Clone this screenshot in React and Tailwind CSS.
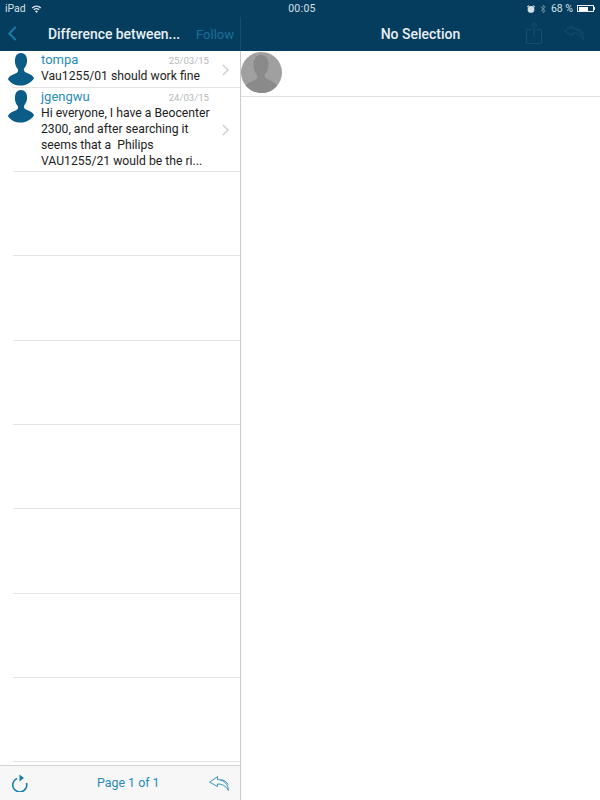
import React from "react";

const Person = ({ className }) => (
  <svg viewBox="0 0 30 38" className={className} fill="currentColor">
    <path d="M15 0c4.300 0 7 3.300 7 8.500 0 3.500-1.300 6.600-3 8.700-.6.800-.8 1.600-.6 2.600.3 1.300 1.300 2 3 2.800 3.300 1.400 7.300 2.800 8.600 6.500-2.700 4.400-8.600 8.400-15 8.400S2.700 34.500 0 30.100c1.300-3.700 5.300-5.100 8.600-6.500 1.700-.8 2.700-1.500 3-2.800.2-1 0-1.800-.6-2.600-1.700-2.100-3-5.200-3-8.700C8 3.300 10.700 0 15 0z" />
  </svg>
);

const ReplyIcon = ({ className }) => (
  <svg viewBox="0 0 20 15" className={className} fill="none" stroke="currentColor" strokeWidth="0.9" strokeLinejoin="round">
    <path d="M8.500.6.700 6.200l7.800 4.400V8C12.500 7.800 17 9.600 19.300 14.400 19.400 8.500 15 3.800 8.500 3.500z" />
    <path d="M11.500 3.700c3 .3 6 1.500 7.800 5" />
  </svg>
);

const ShareIcon = ({ className }) => (
  <svg viewBox="0 0 16 22" className={className} fill="none" stroke="currentColor" strokeWidth="1">
    <path d="M5 7.500H.5v14h15v-14H11" />
    <path d="M8 14.500V.8M4.800 4 8 .8 11.200 4" />
  </svg>
);

const Chevron = () => (
  <svg viewBox="0 0 7 12" className="w-[7px] h-[12px] text-[#c4c8cb]" fill="none" stroke="currentColor" strokeWidth="1.200">
    <path d="M.8.800 6 6 .8 11.200" />
  </svg>
);

const posts = [
  { name: "tompa", date: "25/03/15", lines: ["Vau1255/01 should work fine"], height: "h-[37px]" },
  {
    name: "jgengwu",
    date: "24/03/15",
    lines: ["Hi everyone, I have a Beocenter", "2300, and after searching it", "seems that a  Philips", "VAU1255/21 would be the ri..."],
    height: "h-[84px]",
  },
];

const PostRow = ({ post }) => (
  <div className={`relative flex ${post.height}`}>
    <Person className="absolute left-[6px] top-[2px] w-[30px] h-[33px] text-[#0b5c87]" />
    <div className="ml-[41px] w-[168px] pt-[1px]">
      <div className="flex items-baseline justify-between h-[16px]">
        <span className="text-[13px] leading-[16px] text-[#2a8ab8]">{post.name}</span>
        <span className="text-[9.6px] leading-[16px] text-[#b4b8bb]">{post.date}</span>
      </div>
      {post.lines.map((line, i) => (
        <div key={i} className="text-[12.2px] leading-[16px] text-[#1d1d1d] whitespace-pre">
          {line}
        </div>
      ))}
    </div>
    <div className="ml-auto mr-[11px] self-center">
      <Chevron />
    </div>
    <div className="absolute left-[13px] right-0 bottom-0 border-b border-[#e3e3e3]" />
  </div>
);

const emptyRows = [84, 85, 84, 84, 85, 84, 84];

export default function App() {
  return (
    <div className="w-[600px] h-[800px] flex flex-col bg-white overflow-hidden font-['Roboto','Liberation_Sans',sans-serif]">
      <header className="h-[51px] bg-[#053d5e] text-white shrink-0 flex flex-col">
        <div className="h-[17px] grid grid-cols-3 items-center px-[5px] text-[10.5px] text-[#d5e0e6]">
          <div className="flex items-center gap-[5px]">
            <span>iPad</span>
            <svg viewBox="0 0 12 9" className="w-[11px] h-[8px]" fill="currentColor">
              <path d="M6 9 4.300 7a2.500 2.500 0 0 1 3.400 0zM3.500 6 2.500 4.900a5.300 5.300 0 0 1 7 0L8.500 6a3.800 3.800 0 0 0-5 0zM1.700 4 .6 2.800a8 8 0 0 1 10.800 0L10.300 4a6.500 6.500 0 0 0-8.600 0z" />
            </svg>
          </div>
          <div className="text-center tracking-[0.3px] pl-[4px]">00:05</div>
          <div className="flex items-center justify-end gap-[4px]">
            <svg viewBox="0 0 10 10" className="w-[8px] h-[8px] mr-[1px]" fill="currentColor">
              <circle cx="5" cy="5.500" r="4.200" />
              <path d="M0 2 2 .2l1 .8L.8 3zM10 2 8 .2 7 1l2.200 2z" />
            </svg>
            <svg viewBox="0 0 8 12" className="w-[6px] h-[10px] mr-[1px] text-[#7f9bab]" fill="none" stroke="currentColor">
              <path d="M1 3l6 5.500L4 11V1l3 2.500L1 9" />
            </svg>
            <span>68 %</span>
            <div className="flex items-center">
              <div className="w-[17px] h-[7px] border border-[#e6edf0] p-[0.5px]">
                <div className="w-[68%] h-full bg-white" />
              </div>
              <div className="w-[1px] h-[3px] bg-[#e6edf0]" />
            </div>
          </div>
        </div>
        <div className="flex flex-1">
          <div className="w-[240px] relative flex items-center pt-[1px]">
            <svg viewBox="0 0 10 16" className="absolute left-[7px] top-[9px] w-[10px] h-[15px] text-[#1a7fb0]" fill="none" stroke="currentColor" strokeWidth="2">
              <path d="M9 1 2 8l7 7" />
            </svg>
            <span className="ml-[48px] text-[13.9px] font-medium whitespace-nowrap text-[#e8eff3]">Difference between...</span>
            <span className="ml-auto mr-[6px] text-[13px] text-[#1a6f9c]">Follow</span>
          </div>
          <div className="w-[1px] bg-[#0f5072]" />
          <div className="flex-1 relative flex items-center justify-center pt-[1px]">
            <span className="text-[14px] font-medium text-[#e8eff3]">No Selection</span>
            <ShareIcon className="absolute left-[285px] top-[5px] w-[16px] h-[22px] text-[#16506f]" />
            <ReplyIcon className="absolute left-[323px] top-[8px] w-[20px] h-[15px] text-[#16506f]" />
          </div>
        </div>
      </header>

      <div className="flex flex-1 min-h-0">
        <aside className="w-[241px] shrink-0 border-r border-[#c8cacc] flex flex-col">
          <div className="flex-1 min-h-0 overflow-hidden">
            {posts.map((post) => (
              <PostRow key={post.name} post={post} />
            ))}
            {emptyRows.map((h, i) => (
              <div key={i} className="ml-[13px] border-b border-[#e3e3e3]" style={{ height: h }} />
            ))}
          </div>
          <footer className="h-[35px] shrink-0 border-t border-[#d4d4d4] bg-[#f7f7f7] flex items-center px-[12px]">
            <svg viewBox="0 0 16 18" className="w-[16px] h-[18px] text-[#1a7fb0]" fill="none" stroke="currentColor" strokeWidth="1.600">
              <path d="M5 4.500A7 7 0 1 0 14.500 9" />
              <path d="M7.500 0.500 12 4l-4.500 3.500z" fill="currentColor" stroke="none" />
            </svg>
            <span className="text-[12.4px] text-[#2a8ab8] ml-[69px]">Page 1 of 1</span>
            <ReplyIcon className="ml-auto -mr-[1px] w-[20px] h-[15px] text-[#2a8ab8]" />
          </footer>
        </aside>
        <main className="flex-1">
          <div className="h-[46px] border-b border-[#e0e0e0] pt-[1px]">
            <div className="w-[41px] h-[41px] rounded-full bg-[#a0a0a0] overflow-hidden flex justify-center">
              <Person className="w-[34px] h-[41px] mt-[3px] -ml-[1px] text-[#8a8a8a]" />
            </div>
          </div>
        </main>
      </div>
    </div>
  );
}
